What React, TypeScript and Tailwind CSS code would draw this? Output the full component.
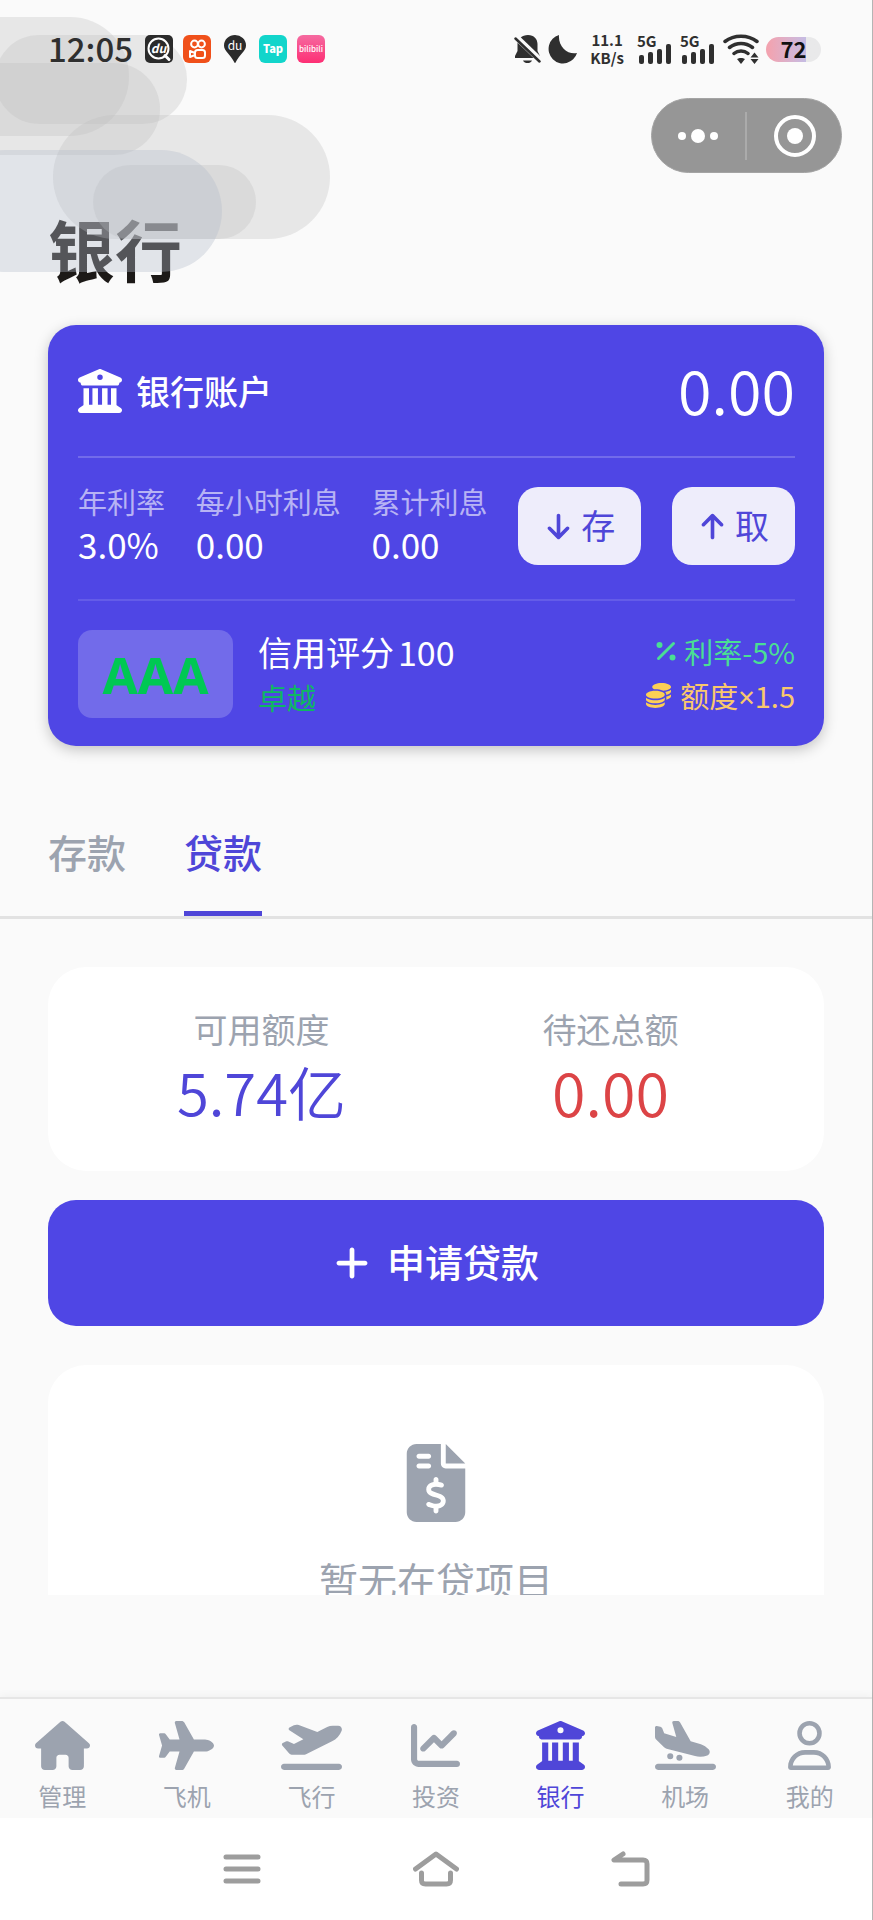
import { useState, type ReactNode } from "react";
import {
  FaArrowDown,
  FaArrowUp,
  FaBuildingColumns,
  FaChartLine,
  FaCoins,
  FaFileInvoiceDollar,
  FaHouse,
  FaPlane,
  FaPlaneArrival,
  FaPlaneDeparture,
  FaPlus,
  FaRegUser,
} from "react-icons/fa6";

const navItems = [
  { label: "管理", icon: FaHouse, size: "w-[55px]" },
  { label: "飞机", icon: FaPlane, size: "w-[55px]" },
  { label: "飞行", icon: FaPlaneDeparture, size: "w-[61px]" },
  { label: "投资", icon: FaChartLine, size: "w-[49px]" },
  { label: "银行", icon: FaBuildingColumns, size: "w-[49px]" },
  { label: "机场", icon: FaPlaneArrival, size: "w-[61px]" },
  { label: "我的", icon: FaRegUser, size: "w-[43px]" },
];

const rates = [
  { label: "年利率", value: "3.0%" },
  { label: "每小时利息", value: "0.00" },
  { label: "累计利息", value: "0.00" },
];

function Clouds() {
  return (
    <svg
      className="pointer-events-none absolute top-0 left-0"
      width="340"
      height="290"
      aria-hidden="true"
    >
      <g fill="#bebebe" fillOpacity="0.3">
        <rect x="-120" y="17" width="249" height="119" rx="59" />
        <rect x="-5" y="35" width="192" height="89" rx="44" />
        <rect x="-120" y="63" width="280" height="92" rx="46" />
        <rect x="53" y="115" width="277" height="124" rx="62" />
        <rect x="93" y="165" width="163" height="74" rx="37" />
      </g>
      <rect x="-55" y="150" width="277" height="122" rx="61" fill="#b7bfcc" fillOpacity="0.37" />
    </svg>
  );
}

function Signal() {
  return (
    <div className="flex w-[35px] flex-col">
      <span className="text-[15px] leading-[12px] font-bold">5G</span>
      <svg viewBox="0 0 34 20" className="-mt-[3px] h-5 w-[34px] self-end" fill="currentColor">
        <rect x="1" y="11" width="5" height="9" rx="2" />
        <rect x="10" y="8" width="5" height="12" rx="2" />
        <rect x="19" y="5" width="5" height="15" rx="2" />
        <rect x="28" y="0" width="5" height="20" rx="2" />
      </svg>
    </div>
  );
}

function StatusBar() {
  return (
    <div className="relative z-10 flex h-[98px] items-center justify-between pr-[51px] pl-12 text-[#2f2f2f]">
      <div className="flex items-center gap-[10px]">
        <span className="mr-[2px] pb-[3px] text-[33px] leading-[36px] font-medium">12:05</span>
        <svg viewBox="0 0 28 28" className="size-7">
          <rect width="28" height="28" rx="5" fill="#2b2b2b" />
          <circle cx="13.5" cy="13.5" r="10" fill="none" stroke="#fff" strokeWidth="2" />
          <path d="M20 20.500l4 4" stroke="#fff" strokeWidth="3" strokeLinecap="round" />
          <text x="13.500" y="18" textAnchor="middle" fontSize="12" fontWeight="700" fontStyle="italic" fill="#fff">
            du
          </text>
        </svg>
        <svg viewBox="0 0 28 28" className="size-7" fill="none" stroke="#fff" strokeWidth="2">
          <rect width="28" height="28" rx="6" fill="#f0501a" stroke="none" />
          <circle cx="11.500" cy="9" r="3.400" />
          <circle cx="18.500" cy="9" r="3.400" />
          <rect x="12" y="15" width="10" height="8" rx="2.500" />
          <path d="M12 18l-5-2v6l5-2z" strokeLinejoin="round" />
        </svg>
        <svg viewBox="0 0 28 28" className="size-7">
          <path d="M14 0a11 10.500 0 0 1 11 10.500c0 5.500-6 8-11 18-5-10-11-12.500-11-18A11 10.500 0 0 1 14 0z" fill="#2b2b2b" />
          <text x="14" y="14.500" textAnchor="middle" fontSize="12" fill="#fff">
            du
          </text>
        </svg>
        <svg viewBox="0 0 28 28" className="size-7">
          <rect width="28" height="28" rx="6" fill="#12d5cb" />
          <text x="14" y="18" textAnchor="middle" fontSize="11" fontWeight="900" fill="#fff">
            Tap
          </text>
        </svg>
        <svg viewBox="0 0 28 28" className="size-7">
          <defs>
            <linearGradient id="pink" x1="0" y1="0" x2="0" y2="1">
              <stop offset="0" stopColor="#f56aa0" />
              <stop offset="1" stopColor="#fd2f74" />
            </linearGradient>
          </defs>
          <rect width="28" height="28" rx="6" fill="url(#pink)" />
          <text x="14" y="17" textAnchor="middle" fontSize="8" fontWeight="500" fill="#fff">
            bilibili
          </text>
        </svg>
      </div>

      <div className="flex items-center">
        <svg viewBox="0 0 28 28" className="mr-[6px] size-7" fill="currentColor">
          <path d="M14 0c6 0 9.500 4 9.500 9v7l2.500 5v2H1v-2l2.500-5V9C3.500 4 8 0 14 0z" />
          <path d="M9 25.500h9c-1 2-2.500 2.500-4.500 2.500S10 27.500 9 25.500z" />
          <path d="M1 1l26 25" stroke="#fafafa" strokeWidth="6" />
          <path d="M1.500 3.500l24 23" stroke="currentColor" strokeWidth="2.500" strokeLinecap="round" />
        </svg>
        <svg viewBox="0 0 29 29" className="mr-[13px] size-[29px]" fill="currentColor">
          <path d="M11 0A14.500 14.500 0 1 0 29 18C20 20 10 12 11 0z" />
        </svg>
        <div className="mr-[13px] flex flex-col text-center text-[15px] leading-[18px] font-bold">
          <span>11.1</span>
          <span>KB/s</span>
        </div>
        <Signal />
        <div className="w-2" />
        <Signal />
        <svg viewBox="0 0 36 30" className="mr-[7px] ml-[8px] h-[30px] w-9" fill="none" stroke="currentColor" strokeWidth="3.500" strokeLinecap="round">
          <path d="M2 7.500c9-7 23-7 32 0M6.500 13.500c7-5.500 16-5.500 23 0M11 19.500c4-3.300 10-3.300 14 0" />
          <path d="M14 25c2-1.500 6-1.500 8 0l-4 5z" fill="currentColor" stroke="none" />
          <path d="M31.500 18.500l4 5h-8zM31.500 30l4-5h-8z" fill="currentColor" stroke="none" />
        </svg>
        <div className="flex h-[25px] w-[55px] justify-center rounded-full bg-linear-to-r from-[#f2a3b0] from-5% via-[#c4bce4] via-73% to-[#e9e9ea] to-73% text-[22px] leading-[23px] font-bold text-[#111]">
          72
        </div>
      </div>
    </div>
  );
}

function Capsule() {
  return (
    <div className="relative z-10 mr-[30px] ml-auto flex h-[75px] w-[191px] items-center rounded-full border border-[#a4a4a4] bg-[#969696]">
      <button aria-label="更多" className="flex h-full flex-1 items-center justify-center gap-[5px]">
        <span className="size-2 rounded-full bg-white" />
        <span className="size-[14px] rounded-full bg-white" />
        <span className="size-2 rounded-full bg-white" />
      </button>
      <span className="h-12 w-[2px] bg-[#ababab]" />
      <button aria-label="关闭" className="flex h-full flex-1 items-center justify-center pl-[2px]">
        <span className="flex size-[42px] items-center justify-center rounded-full border-4 border-white">
          <span className="size-4 rounded-full bg-white" />
        </span>
      </button>
    </div>
  );
}

function CardButton({ children }: { children: ReactNode }) {
  return (
    <button className="mt-[7px] flex h-[78px] w-[123px] items-center justify-center gap-2 rounded-[20px] bg-[#eeedfb] text-[34px] leading-[44px] text-[#4f46d8]">
      {children}
    </button>
  );
}

function AccountCard() {
  return (
    <section className="mx-12 rounded-[28px] bg-[#4f46e5] pr-[29px] pl-[30px] text-white shadow-[0_4px_14px_rgba(0,0,0,0.22)]">
      <div className="flex h-[133px] items-center justify-between border-b-2 border-white/20">
        <h2 className="flex items-center gap-[14px] text-[34px] leading-[44px] font-medium">
          <FaBuildingColumns className="size-11" />
          银行账户
        </h2>
        <span className="pb-1 text-[61px] leading-[72px] [font-weight:350]">0.00</span>
      </div>

      <div className="flex h-[143px] items-start justify-between border-b-2 border-white/12 pt-[22px]">
        {rates.map((rate) => (
          <div key={rate.label} className="flex flex-col">
            <span className="text-[29px] leading-[42px] text-white/60">{rate.label}</span>
            <span className="text-[35px] leading-[44px]">{rate.value}</span>
          </div>
        ))}
        <CardButton>
          <FaArrowDown className="size-[29px]" />
          <span className="pb-[3px]">存</span>
        </CardButton>
        <CardButton>
          <FaArrowUp className="size-[29px]" />
          <span className="pb-[3px]">取</span>
        </CardButton>
      </div>

      <div className="flex h-[145px] items-center">
        <div className="flex h-[88px] w-[155px] items-center justify-center rounded-[14px] bg-white/20 font-['Noto_Sans',sans-serif] text-[51px] leading-[60px] font-bold text-[#00c853]">
          AAA
        </div>
        <div className="ml-[25px] flex flex-col">
          <span className="flex gap-1 text-[34px] leading-[46px]">
            信用评分<span>100</span>
          </span>
          <span className="text-[29px] leading-[44px] text-[#0eb862]">卓越</span>
        </div>
        <div className="ml-auto flex flex-col items-end text-[29px] leading-[44px]">
          <span className="flex items-center gap-2 text-[#4ade94]">
            <svg viewBox="0 0 20 20" className="size-5" fill="currentColor">
              <path d="M2.500 17.500l15-15" stroke="currentColor" strokeWidth="3" strokeLinecap="round" />
              <circle cx="3.500" cy="4" r="3" />
              <circle cx="16.500" cy="16.500" r="3" />
            </svg>
            利率-5%
          </span>
          <span className="flex items-center gap-[9px] text-[#f9c86c]">
            <FaCoins className="size-[25px] text-[#fccf55]" />
            <span>
              额度<span className="font-['Noto_Sans',sans-serif]">×</span>1.5
            </span>
          </span>
        </div>
      </div>
    </section>
  );
}

export default function App() {
  const [tab, setTab] = useState("贷款");
  const [page, setPage] = useState("银行");

  return (
    <div className="relative flex h-screen flex-col border-r border-[#b4b4b4] bg-[#fafafa] font-['Noto_Sans_CJK_SC',sans-serif]">
      <header>
        <StatusBar />
        <Capsule />
        <h1 className="mt-[35px] mb-[37px] ml-12 text-[67px] leading-[80px] font-bold text-[#1c1917]">
          银行
        </h1>
        <Clouds />
      </header>

      <AccountCard />

      <div className="mt-20 flex gap-[58px] border-b-[3px] border-[#e2e2e2] px-12">
        {["存款", "贷款"].map((name) => (
          <button
            key={name}
            onClick={() => setTab(name)}
            className={`border-b-[5px] pb-[35px] text-[39px] leading-[50px] font-medium ${
              tab === name ? "border-[#4f46d8] text-[#4f46d8]" : "border-transparent text-[#9ca3af]"
            }`}
          >
            {name}
          </button>
        ))}
      </div>

      <main className="min-h-0 flex-1 overflow-y-auto px-12 pt-12 [scrollbar-width:none]">
        <section className="grid grid-cols-2 rounded-[38px] bg-white px-[39px] pt-10 pb-11 text-center">
          <div className="flex flex-col gap-1">
            <span className="text-[34px] leading-[44px] text-[#9ca3af]">可用额度</span>
            <span className="text-[58px] leading-[72px] text-[#4f46d8] [font-weight:350]">5.74亿</span>
          </div>
          <div className="flex flex-col gap-1">
            <span className="text-[34px] leading-[44px] text-[#9ca3af]">待还总额</span>
            <span className="text-[61px] leading-[72px] text-[#dc4446] [font-weight:350]">0.00</span>
          </div>
        </section>

        <button className="mt-[29px] flex h-[126px] w-full items-center justify-center gap-4 rounded-[28px] bg-[#4f46e5] text-[38px] leading-[50px] font-medium text-white">
          <FaPlus className="size-[38px]" />
          <span className="pb-1">申请贷款</span>
        </button>

        <section className="mt-[39px] flex flex-col items-center rounded-[38px] bg-white pt-[79px] pb-20 text-[#9ca3af]">
          <FaFileInvoiceDollar className="size-[78px]" />
          <p className="mt-[31px] text-[39px] leading-[52px]">暂无在贷项目</p>
        </section>
      </main>

      <nav className="mt-[102px] grid grid-cols-7 border-t-2 border-[#e6e6e6] pt-[22px] pb-1 shadow-[0_-2px_8px_rgba(0,0,0,0.04)]">
        {navItems.map(({ label, icon: Icon, size }) => (
          <button
            key={label}
            onClick={() => setPage(label)}
            className={`flex flex-col items-center gap-2 ${page === label ? "text-[#4f46d8]" : "text-[#9ca3af]"}`}
          >
            <Icon className={`h-[49px] ${size}`} />
            <span className="text-[24px] leading-[36px]">{label}</span>
          </button>
        ))}
      </nav>

      <div className="flex h-[102px] items-center justify-center gap-[148px] bg-white text-[#9d9d9d]">
        <button aria-label="最近任务">
          <svg viewBox="0 0 46 36" className="h-9 w-[46px]" stroke="currentColor" strokeWidth="5" strokeLinecap="round">
            <path d="M7 6h32M7 18h32M7 30h32" />
          </svg>
        </button>
        <button aria-label="主屏幕">
          <svg viewBox="0 0 46 36" className="h-9 w-[46px]" fill="none" stroke="currentColor" strokeWidth="5" strokeLinecap="round" strokeLinejoin="round">
            <path d="M2.500 18L23 3l20.500 15M8.500 22v7c0 3 1 4 4 4h21c3 0 4-1 4-4v-7" />
          </svg>
        </button>
        <button aria-label="返回">
          <svg viewBox="0 0 46 36" className="h-9 w-[46px]" fill="none" stroke="currentColor" strokeWidth="5" strokeLinecap="round" strokeLinejoin="round">
            <path d="M16 3L7 9h29c3 0 4 1 4 4v16c0 3-1 4-4 4H14" />
          </svg>
        </button>
      </div>
    </div>
  );
}
